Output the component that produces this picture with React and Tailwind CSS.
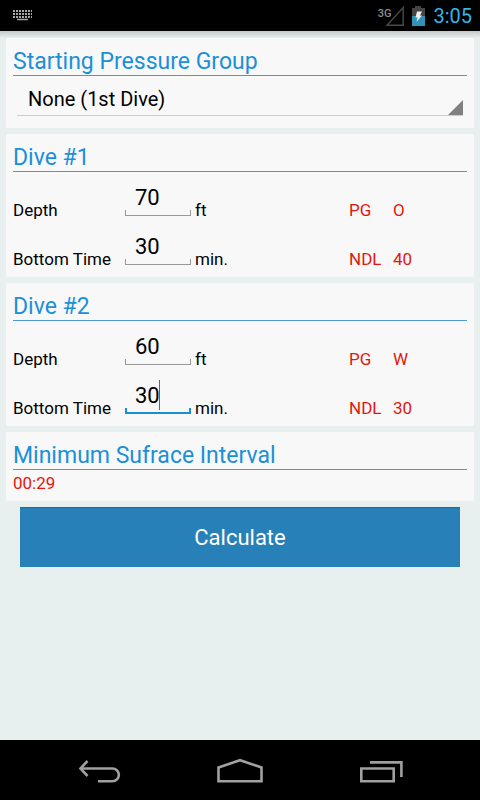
import { useState } from 'react'

const initialDives = [
  { id: 1, depth: '70', time: '30', group: 'O', ndl: '40' },
  { id: 2, depth: '60', time: '30', group: 'W', ndl: '30' },
]

function StatusBar() {
  return (
    <header className="flex h-[31px] items-center justify-between bg-black pl-3 pr-2">
      <svg width="20" height="12" viewBox="0 0 20 12" className="text-[#a5a5a5]">
        <path d="M1 1h19M1 4h19M1 7h19" stroke="currentColor" strokeWidth="2" strokeDasharray="2 1" fill="none" />
        <path d="M5 9.500h11" stroke="currentColor" strokeWidth="1.500" fill="none" />
      </svg>
      <div className="flex items-center">
        <span className="mt-[3px] self-start text-[11px] leading-[14px] font-medium text-[#8c8c8c]">3G</span>
        <svg width="20" height="22" viewBox="0 0 20 22" className="-ml-1.5 mr-1.5">
          <path d="M18.200 2.500V20.200H2Z" fill="none" stroke="#4a4a4a" strokeWidth="1.400" />
        </svg>
        <svg width="14" height="20" viewBox="0 0 14 20" className="mr-2">
          <path d="M4 0h6v2h4v8H1V2h3z" fill="#444" />
          <path d="M1 10h13v10H1z" fill="#2f93b8" />
          <path d="M6 5.500h5L9 9.500h2L5.500 16l1-4.500H4.500z" fill="#eee" />
        </svg>
        <span className="text-xl leading-6 text-[#33b5e5]">3:05</span>
      </div>
    </header>
  )
}

function Card({ title, children, className = '' }) {
  return (
    <section className={`rounded-xs bg-[#f8f8f8] px-[7px] ${className}`}>
      <h2 className="h-[38px] border-b border-[#4a98d8] pt-2 text-[23px] leading-8 text-[#1a90d8]">
        {title}
      </h2>
      {children}
    </section>
  )
}

function NumberRow({ id, label, unit, value, onChange, focused, resultLabel, result }) {
  return (
    <div className="flex h-[49px] items-end pb-px">
      <label htmlFor={id} className="w-28 shrink-0 text-[17px] leading-5">{label}</label>
      <div className="relative w-[66px] shrink-0 pb-1">
        <input
          id={id}
          type="text"
          inputMode="numeric"
          value={value}
          onChange={e => onChange(e.target.value)}
          className="block h-[30px] w-full bg-transparent pl-2.5 text-[22px] outline-none"
        />
        {focused && <span className="absolute left-[34px] top-0 h-[30px] w-px bg-[#666]" />}
        <div className={focused
          ? '-mt-0.5 h-1.5 border-x-2 border-b-2 border-[#1a8fd0]'
          : '-mt-0.5 h-1.5 border-x border-b border-[#999]'}
        />
      </div>
      <span className="ml-1 flex-1 text-[17px] leading-5">{unit}</span>
      <span className="w-11 text-[17px] leading-5 text-[#e3170c]">{resultLabel}</span>
      <output htmlFor={id} className="w-[74px] text-[17px] leading-5 text-[#e3170c]">{result}</output>
    </div>
  )
}

function NavBar() {
  return (
    <nav className="flex h-[60px] justify-center bg-black text-[#a0a0a0]">
      <button aria-label="Back" className="flex w-[140px] items-center justify-center">
        <svg width="44" height="26" viewBox="0 0 44 26" fill="none" stroke="currentColor" strokeWidth="2.600">
          <path d="M9.500 4 2.500 11.500l7 7.500" />
          <path d="M2.500 11.500h32a6.200 6.200 0 0 1 0 12.700H20" />
        </svg>
      </button>
      <button aria-label="Home" className="flex w-[140px] items-center justify-center">
        <svg width="48" height="26" viewBox="0 0 48 26" fill="none" stroke="currentColor" strokeWidth="2.600">
          <path d="M2.500 10.500 24 3.200l21.500 7.300v13.700h-43z" />
        </svg>
      </button>
      <button aria-label="Recent apps" className="flex w-[140px] items-center justify-center">
        <svg width="46" height="26" viewBox="0 0 46 26" fill="none" stroke="currentColor" strokeWidth="2.600">
          <path d="M4.300 11.500h32.400v12.700H4.300z" />
          <path d="M13 5.400h31.400V20" />
        </svg>
      </button>
    </nav>
  )
}

export default function App() {
  const [group, setGroup] = useState('none')
  const [dives, setDives] = useState(initialDives)

  function updateDive(id, field, value) {
    setDives(dives.map(d => (d.id === id ? { ...d, [field]: value } : d)))
  }

  return (
    <div className="flex min-h-screen flex-col bg-[#e7efef] font-['Roboto',sans-serif] text-black">
      <StatusBar />
      <div className="h-[7px] bg-linear-to-b from-[#c3c8c9] to-[#e7efef]" />

      <main className="flex flex-1 flex-col gap-1.5 px-1.5">
        <Card title="Starting Pressure Group" className="pb-3">
          <div className="relative mx-1 border-b border-[#ccc]">
            <select
              aria-label="Starting Pressure Group"
              value={group}
              onChange={e => setGroup(e.target.value)}
              className="block h-[39px] w-full appearance-none bg-transparent pt-1.5 pl-[11px] text-xl text-black outline-none"
            >
              <option value="none">None (1st Dive)</option>
              <option value="A">A</option>
              <option value="B">B</option>
              <option value="C">C</option>
            </select>
            <svg width="15" height="15" viewBox="0 0 15 15" className="pointer-events-none absolute bottom-0 right-0">
              <path d="M15 0v15H0z" fill="#808080" />
            </svg>
          </div>
        </Card>

        {dives.map(dive => (
          <Card key={dive.id} title={`Dive #${dive.id}`} className="pb-[7px]">
            <NumberRow
              id={`depth-${dive.id}`}
              label="Depth"
              unit="ft"
              value={dive.depth}
              onChange={v => updateDive(dive.id, 'depth', v)}
              resultLabel="PG"
              result={dive.group}
            />
            <NumberRow
              id={`time-${dive.id}`}
              label="Bottom Time"
              unit="min."
              value={dive.time}
              onChange={v => updateDive(dive.id, 'time', v)}
              focused={dive.id === 2}
              resultLabel="NDL"
              result={dive.ndl}
            />
          </Card>
        ))}

        <Card title="Minimum Sufrace Interval" className="pb-2">
          <p className="pt-[3px] text-[17px] leading-5 text-[#e3170c]">00:29</p>
        </Card>

        <button className="mx-3.5 h-[60px] border-t border-[#0f6fae] bg-[#2880b9] text-[22px] text-white">
          Calculate
        </button>
      </main>

      <NavBar />
    </div>
  )
}
